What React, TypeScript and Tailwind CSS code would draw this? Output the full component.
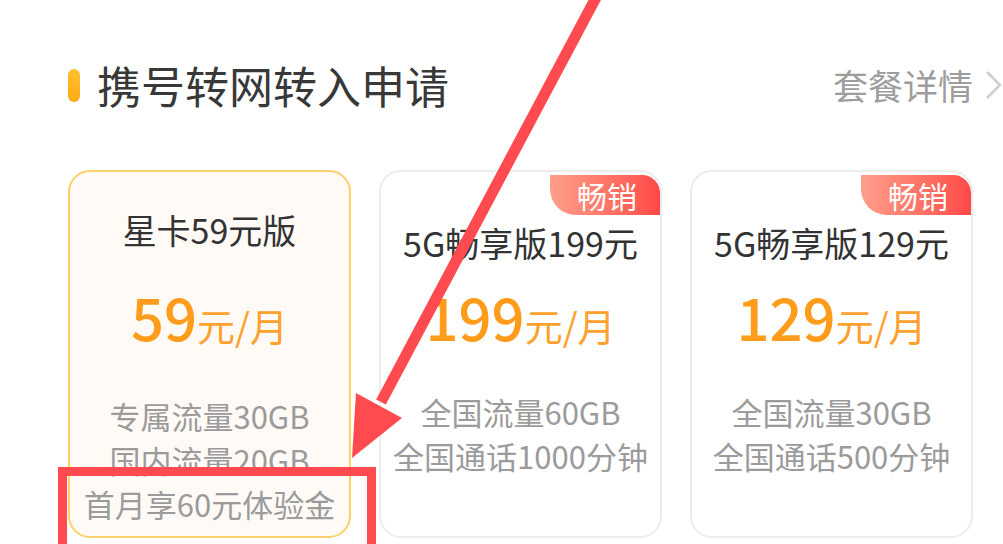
const font = { fontFamily: '"Noto Sans CJK SC", "Noto Sans", sans-serif' };

type Plan = {
  name: string;
  price: string;
  features: string[];
  hot: boolean;
  selected: boolean;
};

const plans: Plan[] = [
  {
    name: "星卡59元版",
    price: "59",
    features: ["专属流量30GB", "国内流量20GB", "首月享60元体验金"],
    hot: false,
    selected: true,
  },
  {
    name: "5G畅享版199元",
    price: "199",
    features: ["全国流量60GB", "全国通话1000分钟"],
    hot: true,
    selected: false,
  },
  {
    name: "5G畅享版129元",
    price: "129",
    features: ["全国流量30GB", "全国通话500分钟"],
    hot: true,
    selected: false,
  },
];

function PlanCard({ plan }: { plan: Plan }) {
  return (
    <div
      className={
        plan.selected
          ? "relative flex h-[368px] w-[283px] flex-col items-center rounded-[22px] border-2 border-[#fdd06a] bg-[#fffaf6]"
          : "relative flex h-[368px] w-[283px] flex-col items-center rounded-[22px] border-2 border-[#ececec] bg-white"
      }
    >
      {plan.hot && (
        <div className="absolute right-0 top-[3px] flex h-[40px] w-[110px] items-center justify-center rounded-tr-[18px] rounded-bl-[26px] bg-gradient-to-r from-[#ff9d8b] to-[#ff4747] pl-[4px] text-[30px] leading-none text-white">
          畅销
        </div>
      )}

      <div className={plan.hot ? "h-[109px] pt-[51px]" : "h-[109px] pt-[38px]"}>
        <div className="text-[34px] leading-[40px] text-[#333333]">
          {plan.name}
        </div>
      </div>

      <div className="flex h-[70px] items-center justify-center">
        <div className="flex items-baseline text-[#ff9c1c]">
          <span className="text-[58px] font-medium leading-none">{plan.price}</span>
          <span className="text-[38px] leading-none text-[#ffa12e]">元/月</span>
        </div>
      </div>

      <div className={plan.hot ? "mt-[39px] flex flex-col items-center" : "mt-[43px] flex flex-col items-center"}>
        {plan.features.map((f) => (
          <div key={f} className="text-[31px] leading-[44px] text-[#9b9b9b]">
            {f}
          </div>
        ))}
      </div>
    </div>
  );
}

export default function App() {
  return (
    <div className="relative h-[544px] w-[1003px] overflow-hidden bg-white" style={font}>
      <div className="pl-[68px] pt-[61px]">
        <div className="flex h-[48px] items-center justify-between">
          <div className="flex items-center">
            <div className="h-[33px] w-[12px] rounded-full bg-gradient-to-b from-[#ffc02e] to-[#ffaa12]" />
            <div className="ml-[17px] text-[44px] leading-[48px] text-[#383838]">携号转网转入申请</div>
          </div>
          <div className="flex items-center">
            <span className="text-[35px] leading-[48px] text-[#9d9d9d]">套餐详情</span>
            <svg className="ml-[10px]" width="20" height="32" viewBox="0 0 20 32">
              <polyline points="4,3 17,16 4,29" fill="none" stroke="#cfcfcf" strokeWidth="2.5" />
            </svg>
          </div>
        </div>

        <div className="mt-[61px] flex gap-[28px]">
          {plans.map((p) => (
            <PlanCard key={p.name} plan={p} />
          ))}
        </div>
      </div>

      <div className="absolute left-[58px] top-[467px] h-[90px] w-[318px] border-[9px] border-[#ff4b4f]" />

      <svg className="absolute left-0 top-0" width="1003" height="544" viewBox="0 0 1003 544">
        <line x1="600" y1="-10" x2="381" y2="402" stroke="#ff4b4f" strokeWidth="11" />
        <polygon points="352,458 356,393 402,418" fill="#ff4b4f" />
      </svg>
    </div>
  );
}
